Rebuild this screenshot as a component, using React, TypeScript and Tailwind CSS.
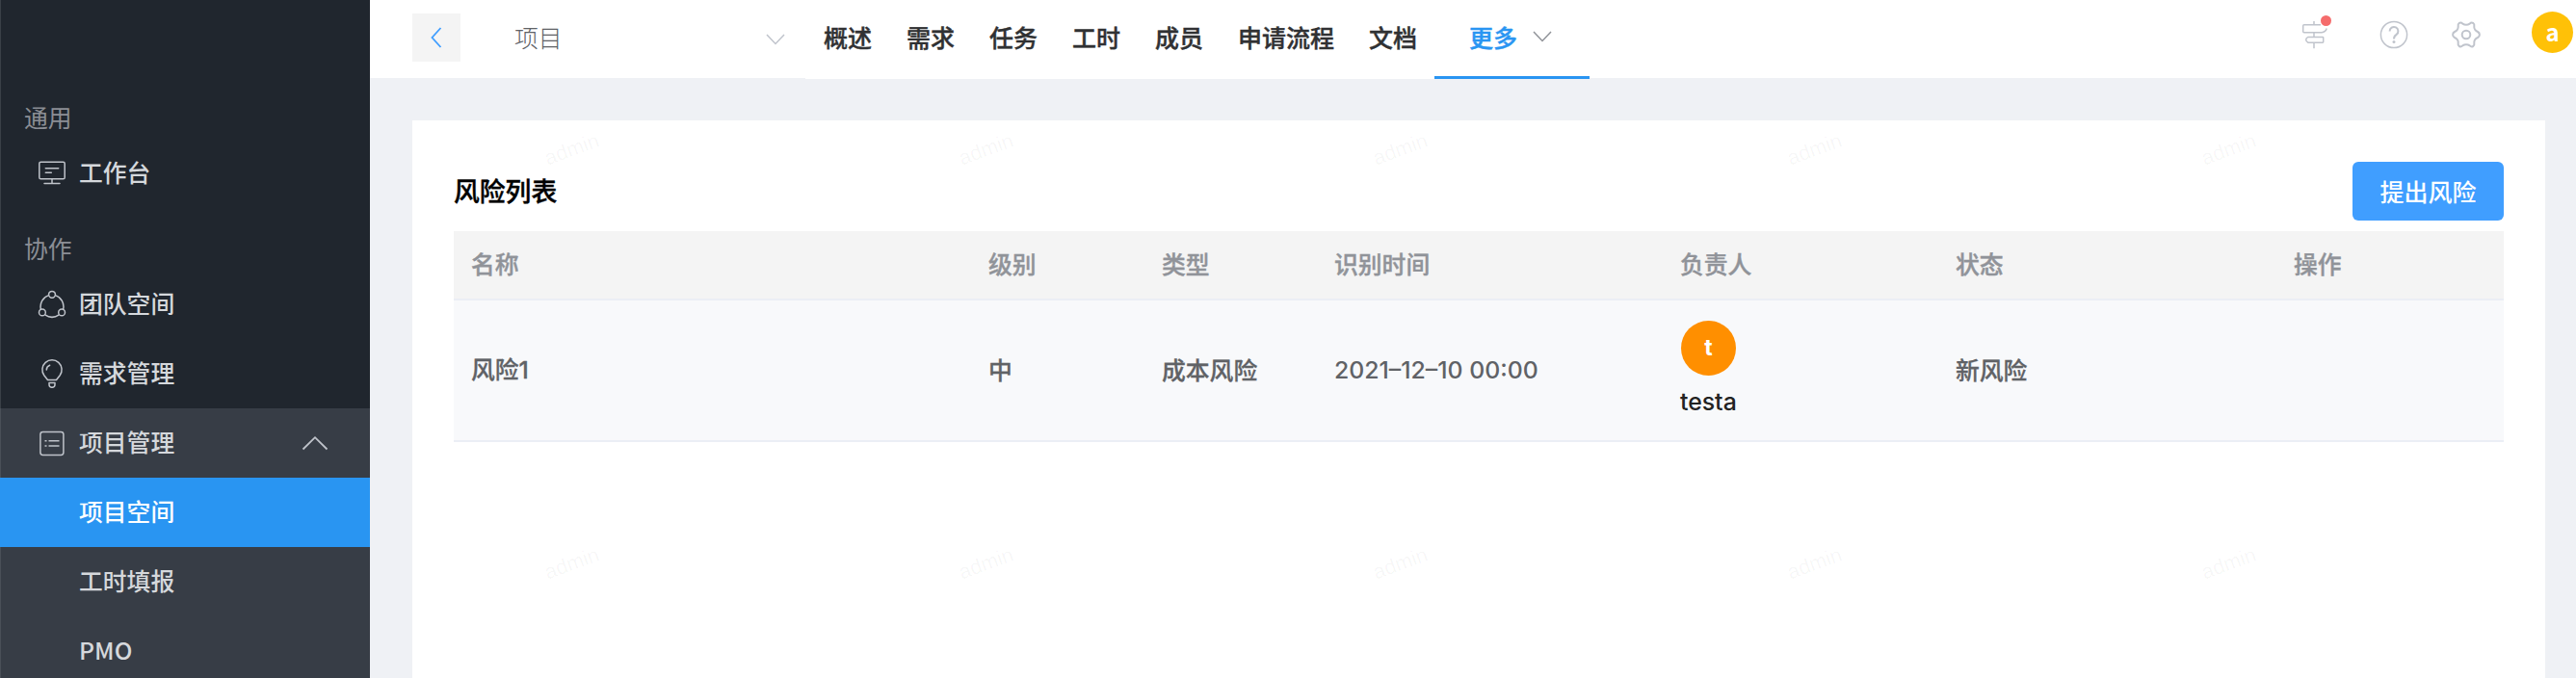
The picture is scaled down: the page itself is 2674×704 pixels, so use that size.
import type { ReactNode } from "react";

const Monitor = () => (
  <svg className="h-[30px] w-[30px]" viewBox="0 0 30 30" fill="none" stroke="currentColor" strokeWidth="1.5" strokeLinecap="round">
    <rect x="1.8" y="3.2" width="26.4" height="17.6" rx="1.6" />
    <path d="M8.3 9.7h13.4M8.3 14.3h6M15 21v4.6M7 25.6h16" />
  </svg>
);

const Team = () => (
  <svg className="h-[30px] w-[30px]" viewBox="0 0 30 30" fill="none" stroke="currentColor" strokeWidth="1.5">
    <circle cx="15" cy="4.8" r="3.4" />
    <circle cx="4.9" cy="23.4" r="3.4" />
    <circle cx="25.1" cy="23.4" r="3.4" />
    <path d="M11.6 5.6A12.3 12.3 0 0 0 3.4 20.2M18.4 5.6A12.3 12.3 0 0 1 26.6 20.2M7.7 25.9a13 13 0 0 0 14.6 0" />
  </svg>
);

const Bulb = () => (
  <svg className="h-[30px] w-[30px]" viewBox="0 0 30 30" fill="none" stroke="currentColor" strokeWidth="1.5" strokeLinecap="round" strokeLinejoin="round">
    <path d="M10.5 21.500L6.800 16.800A10.100 10.100 0 1 1 23.200 16.800L19.500 21.500Z" />
    <path d="M9.300 11a5.300 5.300 0 0 1 3.400-4.800M12 24.600h6v1.700a3 3 0 0 1-6 0Z" />
  </svg>
);

const ListBox = () => (
  <svg className="h-[30px] w-[30px]" viewBox="0 0 30 30" fill="none" stroke="currentColor" strokeWidth="1.5">
    <rect x="2.900" y="3.400" width="24" height="24" rx="2.600" />
    <path d="M11.500 12.800h11M11.500 18h11M7.500 12.800h2M7.500 18h2" />
  </svg>
);

const Signpost = () => (
  <svg className="h-[30px] w-[28px]" viewBox="0 0 28 30" fill="none" stroke="currentColor" strokeWidth="1.500" strokeLinejoin="round">
    <path d="M13 1v3.700M13 12.700v4.700M13 23.300v6M20 4.700H2.700a1 1 0 0 0-1 1v6a1 1 0 0 0 1 1H21q4.200-.4 5.200-4.200" />
    <path d="M7 17.400h15a.700.700 0 0 1 .7.700v4.500a.700.700 0 0 1-.7.700H7Q4.700 22.300 4.700 20.300T7 17.400Z" />
  </svg>
);

const Question = () => (
  <svg className="h-[30px] w-[30px]" viewBox="0 0 30 30" fill="none" stroke="currentColor" strokeWidth="1.500">
    <circle cx="15" cy="15" r="13.600" />
    <path d="M10.600 11.400a4.400 4.400 0 1 1 7 3.500Q15 16.600 15 19.500" strokeWidth="2" />
    <circle cx="15" cy="22.600" r="1.500" fill="currentColor" stroke="none" />
  </svg>
);

const Gear = () => (
  <svg className="h-[30px] w-[30px]" viewBox="0 0 30 30" fill="none" stroke="currentColor" strokeWidth="2" strokeLinejoin="round">
    <path d="M11.300 3.600Q13 4.700 15 4.700T18.700 3.600Q20.300 1.900 22.300 3Q23.800 4 23.300 6.200Q23 8.500 24.200 9.900T27 12Q28.900 13 28.900 15T27 18Q25.300 18.700 24.200 20.100T23.300 23.800Q23.800 26 22.300 27Q20.300 28.100 18.700 26.400Q17 25.300 15 25.300T11.300 26.400Q9.700 28.100 7.700 27Q6.200 26 6.700 23.800Q7 21.500 5.800 20.100T3 18Q1.100 17 1.100 15T3 12Q4.700 11.300 5.800 9.900T6.700 6.200Q6.200 4 7.700 3Q9.700 1.900 11.300 3.600Z" />
    <circle cx="15" cy="15" r="4.300" />
  </svg>
);

const MenuItem = ({ icon, label, className = "text-[#d5d8dc]" }: { icon?: ReactNode; label: string; className?: string }) => (
  <div className={`flex h-[72px] shrink-0 items-center pl-[39px] ${className}`}>
    <span className="mr-[13px] flex w-[30px] text-[#bfc3ca]">{icon}</span>
    <span className="-mt-[3px] text-[24.8px] font-medium">{label}</span>
  </div>
);

const Section = ({ label }: { label: string }) => (
  <div className="flex h-[42px] shrink-0 items-center pb-[3px] pl-[25px] text-[24.8px] text-[#8b8e95]">{label}</div>
);

const Sidebar = () => (
  <aside className="flex w-[384px] shrink-0 flex-col overflow-hidden bg-[linear-gradient(90deg,#3a4047_1px,#20262e_1px)] pt-[102px]">
    <Section label="通用" />
    <MenuItem icon={<Monitor />} label="工作台" />
    <div className="h-[22px] shrink-0" />
    <Section label="协作" />
    <MenuItem icon={<Team />} label="团队空间" />
    <MenuItem icon={<Bulb />} label="需求管理" />
    <div className="flex items-center justify-between bg-[linear-gradient(90deg,#4a5058_1px,#373d46_1px)] pr-[43px]">
      <MenuItem icon={<ListBox />} label="项目管理" />
      <svg className="h-[16px] w-[28px]" viewBox="0 0 28 16" fill="none" stroke="#bfc3ca" strokeWidth="1.800">
        <path d="M1.500 14.500 14 2.200 26.500 14.500" />
      </svg>
    </div>
    <MenuItem label="项目空间" className="bg-[#2995f2] text-white" />
    <MenuItem label="工时填报" className="bg-[linear-gradient(90deg,#4a5058_1px,#373d46_1px)] text-[#d5d8dc]" />
    <MenuItem label="PMO" className="bg-[linear-gradient(90deg,#4a5058_1px,#373d46_1px)] text-[#d5d8dc]" />
  </aside>
);

const tabs = ["概述", "需求", "任务", "工时", "成员", "申请流程", "文档"];

const Header = () => (
  <header className="flex h-[82px] items-start">
    <div className="flex h-[81px] w-[452px] bg-white pl-[44px]">
      <div className="mt-[14px] flex h-[50px] w-[50px] items-center justify-center bg-[#f4f4f4]">
        <svg className="h-[24px] w-[14px]" viewBox="0 0 14 24" fill="none" stroke="#409eff" strokeWidth="1.800">
          <path d="M11.500 2 2.500 12l9 10" />
        </svg>
      </div>
      <div className="flex h-[79px] flex-1 items-center justify-between pr-[21px] pl-[56px]">
        <span className="-mt-[2px] text-[24.800px] font-light text-[#606266]">项目</span>
        <svg className="mt-[3px] h-[12px] w-[20px]" viewBox="0 0 20 12" fill="none" stroke="#c0c4cc" strokeWidth="1.500">
          <path d="M1 1l9 9.500L19 1" />
        </svg>
      </div>
    </div>
    <nav className="flex h-[82px] bg-white text-[25px] font-medium text-[#303133] [-webkit-text-stroke:0.4px]">
      {tabs.map((t) => (
        <div key={t} className="flex h-[77px] items-center pr-[17px] pl-[19px]">{t}</div>
      ))}
      <div className="ml-px flex h-[82px] w-[161px] items-start gap-[16px] border-b-[3px] border-[#2995f2] pl-[36px] text-[#2995f2]">
        <span className="flex h-[77px] items-center">更多</span>
        <svg className="mt-[32px] h-[12px] w-[20px]" viewBox="0 0 20 12" fill="none" stroke="#909399" strokeWidth="1.500">
          <path d="M1 1l9 9.500L19 1" />
        </svg>
      </div>
    </nav>
    <div className="flex h-[81px] flex-1 items-start justify-end bg-white pr-[3px] text-[#c0c4cc]">
      <div className="relative mt-[21px] mr-[53px]">
        <Signpost />
        <span className="absolute -top-[5px] right-[-3px] h-[11px] w-[11px] rounded-full bg-[#f56c6c]" />
      </div>
      <div className="mt-[21px] mr-[45px]"><Question /></div>
      <div className="mt-[21px] mr-[53px]"><Gear /></div>
      <div className="mt-[12px] flex h-[43px] w-[43px] items-center justify-center rounded-full bg-[#ffc107] pb-[1px] text-[24px] font-bold text-white">a</div>
    </div>
  </header>
);

const cols = "grid grid-cols-[537px_180px_179px_359px_286px_351px_236px] *:pl-[18px]";
const marks = [0, 1].flatMap((r) => [0, 1, 2, 3, 4].map((c) => ({ x: 136 + c * 430, y: 15 + r * 430 })));

export default function App() {
  return (
    <div className="flex h-[704px] w-[2674px] overflow-hidden bg-[#eff1f5] font-['Noto_Sans_CJK_SC',sans-serif] leading-none">
      <Sidebar />
      <div className="flex min-w-0 flex-1 flex-col">
        <Header />
        <main className="relative mt-[43px] mr-[32px] ml-[44px] flex-1 overflow-hidden bg-white pr-[43px] pl-[43px]">
          <div className="flex h-[115px] items-end justify-between pb-[11px]">
            <h1 className="flex h-[61px] items-center pb-px text-[26.800px] font-medium text-black [-webkit-text-stroke:0.4px]">风险列表</h1>
            <button className="flex h-[61px] w-[157px] items-center justify-center rounded-[6px] bg-[#409eff] pb-px text-[25px] font-medium text-white">提出风险</button>
          </div>
          <div className={`${cols} h-[72px] items-center border-b-2 border-[#ebeef5] bg-[#f4f4f4] pb-[3px] text-[24.800px] font-medium text-[#909399] [-webkit-text-stroke:0.4px]`}>
            <span>名称</span><span>级别</span><span>类型</span><span>识别时间</span><span>负责人</span><span>状态</span><span>操作</span>
          </div>
          <div className={`${cols} h-[147px] items-center border-b-2 border-[#ebeef5] bg-[#f8f9fb] text-[24.800px] font-medium text-[#606266]`}>
            <span className="-mt-[3px] [-webkit-text-stroke:0.3px]">风险<span className="font-['Inter']">1</span></span>
            <span className="-mt-[3px] [-webkit-text-stroke:0.3px]">中</span>
            <span className="-mt-[3px] [-webkit-text-stroke:0.3px]">成本风险</span>
            <span className="-mt-px font-['Inter'] text-[24.800px]">2021–12–10 00:00</span>
            <div className="flex h-full flex-col items-start pt-[21px] font-['Inter']">
              <span className="ml-px flex h-[57px] w-[57px] items-center justify-center rounded-full bg-[#ff8f00] text-[23px] font-bold text-white">t</span>
              <span className="mt-[15px] text-[24.800px] text-[#222]">testa</span>
            </div>
            <span className="-mt-[3px] [-webkit-text-stroke:0.3px]">新风险</span>
            <span />
          </div>
          {marks.map((m) => (
            <span key={`${m.x}-${m.y}`} className="absolute flex h-[32px] w-[60px] -rotate-[20deg] items-center justify-center font-['Liberation_Sans'] text-[21.500px] text-black/4" style={{ left: m.x, top: m.y }}>
              admin
            </span>
          ))}
        </main>
      </div>
    </div>
  );
}
